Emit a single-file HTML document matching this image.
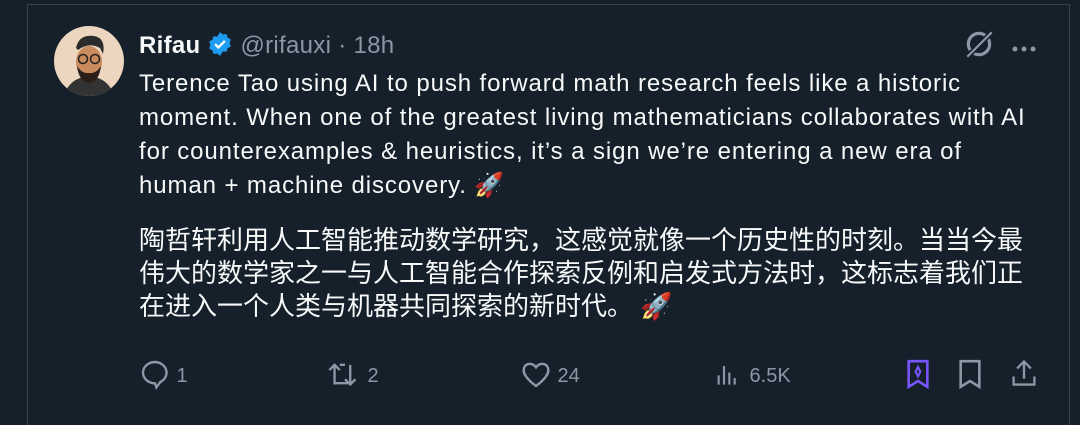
<!DOCTYPE html>
<html><head><meta charset="utf-8"><style>
body{margin:0;width:1080px;height:412px;background:#15202b;overflow:hidden;font-family:"Liberation Sans","Noto Sans CJK SC",sans-serif;color:#f7f9f9;position:relative}
.card{position:absolute;left:27px;top:4px;width:1041px;height:420px;border-left:1px solid #38444d;border-right:1px solid #38444d;border-top:1px solid #38444d}
.av{position:absolute;left:54px;top:26px;width:70px;height:70px;border-radius:50%;background:#ecd6c0;overflow:hidden}
.hdr{position:absolute;left:139px;top:31px;font-size:24px;white-space:nowrap;letter-spacing:0.3px}
.hdr b{font-weight:700}
.hdr span{color:#8b98a5}
.t{position:absolute;left:139px;font-size:24px;letter-spacing:0.9px;line-height:34px;white-space:nowrap;color:#f7f9f9}
.zh{position:absolute;left:139px;font-size:26px;line-height:33px;white-space:nowrap}
.bar{position:absolute;top:358px;font-size:20px;color:#8b98a5}
svg{display:inline-block}
</style></head><body>
<div class="card"></div>
<div class="av"><svg width="70" height="70" viewBox="0 0 70 70">
<path d="M10 70 Q15 52 35 50 Q55 52 60 70Z" fill="#333"/>
<ellipse cx="35" cy="36" rx="13" ry="16" fill="#c98a5e"/>
<path d="M22 22 Q25 8 40 10 Q52 12 49 28 L46 22 Q35 16 24 24Z" fill="#2b2b2b"/>
<path d="M23 40 Q25 56 35 57 Q45 56 47 40 Q42 48 35 47 Q28 48 23 40Z" fill="#2b1e16"/>
<circle cx="29" cy="33" r="4.5" fill="none" stroke="#222" stroke-width="1.5"/><circle cx="41" cy="33" r="4.5" fill="none" stroke="#222" stroke-width="1.5"/>
</svg></div>
<div class="hdr"><b>Rifau</b> <svg width="26" height="26" viewBox="0 0 24 24" style="vertical-align:-4px"><path d="M12 1l2.6 2.2 3.4-.4 1 3.3 3 1.6-1 3.3 1 3.3-3 1.6-1 3.3-3.4-.4L12 23l-2.6-2.2-3.4.4-1-3.3-3-1.6 1-3.3-1-3.3 3-1.6 1-3.3 3.4.4z" fill="#1d9bf0"/><path d="M7.5 12.2l3 3 6-6" stroke="#fff" stroke-width="2.2" fill="none"/></svg> <span>@rifauxi · 18h</span></div>
<svg style="position:absolute;left:962px;top:27px" width="34" height="34" viewBox="0 0 32 32"><circle cx="16" cy="16" r="10" fill="none" stroke="#8b98a5" stroke-width="3"/><path d="M4 29L29 4" stroke="#15202b" stroke-width="5"/><path d="M5 28L28 5" stroke="#8b98a5" stroke-width="2"/></svg>
<div style="position:absolute;left:1011px;top:40px;"><svg width="26" height="8"><circle cx="4" cy="4" r="2.5" fill="#8b98a5"/><circle cx="13" cy="4" r="2.5" fill="#8b98a5"/><circle cx="22" cy="4" r="2.5" fill="#8b98a5"/></svg></div>
<div class="t" style="top:67px">Terence Tao using AI to push forward math research feels like a historic</div>
<div class="t" style="top:101px">moment. When one of the greatest living mathematicians collaborates with AI</div>
<div class="t" style="top:135px">for counterexamples &amp; heuristics, it’s a sign we’re entering a new era of</div>
<div class="t" style="top:169px">human + machine discovery. 🚀</div>
<div class="zh" style="top:224px">陶哲轩利用人工智能推动数学研究，这感觉就像一个历史性的时刻。当当今最</div>
<div class="zh" style="top:257px">伟大的数学家之一与人工智能合作探索反例和启发式方法时，这标志着我们正</div>
<div class="zh" style="top:290px">在进入一个人类与机器共同探索的新时代。 🚀</div>
<div class="bar" style="left:139px"><svg width="32" height="32" viewBox="0 0 24 24" style="vertical-align:-8px"><path d="M12 3a9 8 0 1 0 0 16l1 3 3-4a9 8 0 0 0-4-15z" fill="none" stroke="#8b98a5" stroke-width="1.8"/></svg> 1</div>
<div class="bar" style="left:328px"><svg width="34" height="32" viewBox="0 0 26 24" style="vertical-align:-8px"><path d="M5 20V5M1 9l4-4 4 4M9 19h8V5M21 16l-4 4-4-4M9 5h4M5 19h4" fill="none" stroke="#8b98a5" stroke-width="1.8"/></svg> 2</div>
<div class="bar" style="left:520px"><svg width="32" height="32" viewBox="0 0 24 24" style="vertical-align:-8px"><path d="M12 21C4 15 2 11 3 7.5 4 4 9 3 12 7c3-4 8-3 9 .5 1 3.5-1 7.5-9 13.5z" fill="none" stroke="#8b98a5" stroke-width="1.8"/></svg> 24</div>
<div class="bar" style="left:712px"><svg width="32" height="32" viewBox="0 0 24 24" style="vertical-align:-8px"><path d="M5 20V13M9 20V6M13 20V11M17 20V15" stroke="#8b98a5" stroke-width="1.6"/></svg> 6.5K</div>
<svg style="position:absolute;left:904px;top:358px" width="28" height="32" viewBox="0 0 24 26"><path d="M4 2h16v22l-8-5-8 5z" fill="none" stroke="#7856ff" stroke-width="2.2"/><path d="M12 7l2 4-2 4-2-4z" fill="none" stroke="#7856ff" stroke-width="1.8"/></svg>
<svg style="position:absolute;left:956px;top:358px" width="28" height="32" viewBox="0 0 24 26"><path d="M4 2h16v22l-8-5-8 5z" fill="none" stroke="#8b98a5" stroke-width="2.2"/></svg>
<svg style="position:absolute;left:1010px;top:358px" width="28" height="30" viewBox="0 0 24 26"><path d="M12 18V3M6 9l6-6 6 6M3 16v7h18v-7" fill="none" stroke="#8b98a5" stroke-width="2"/></svg>
</body></html>
